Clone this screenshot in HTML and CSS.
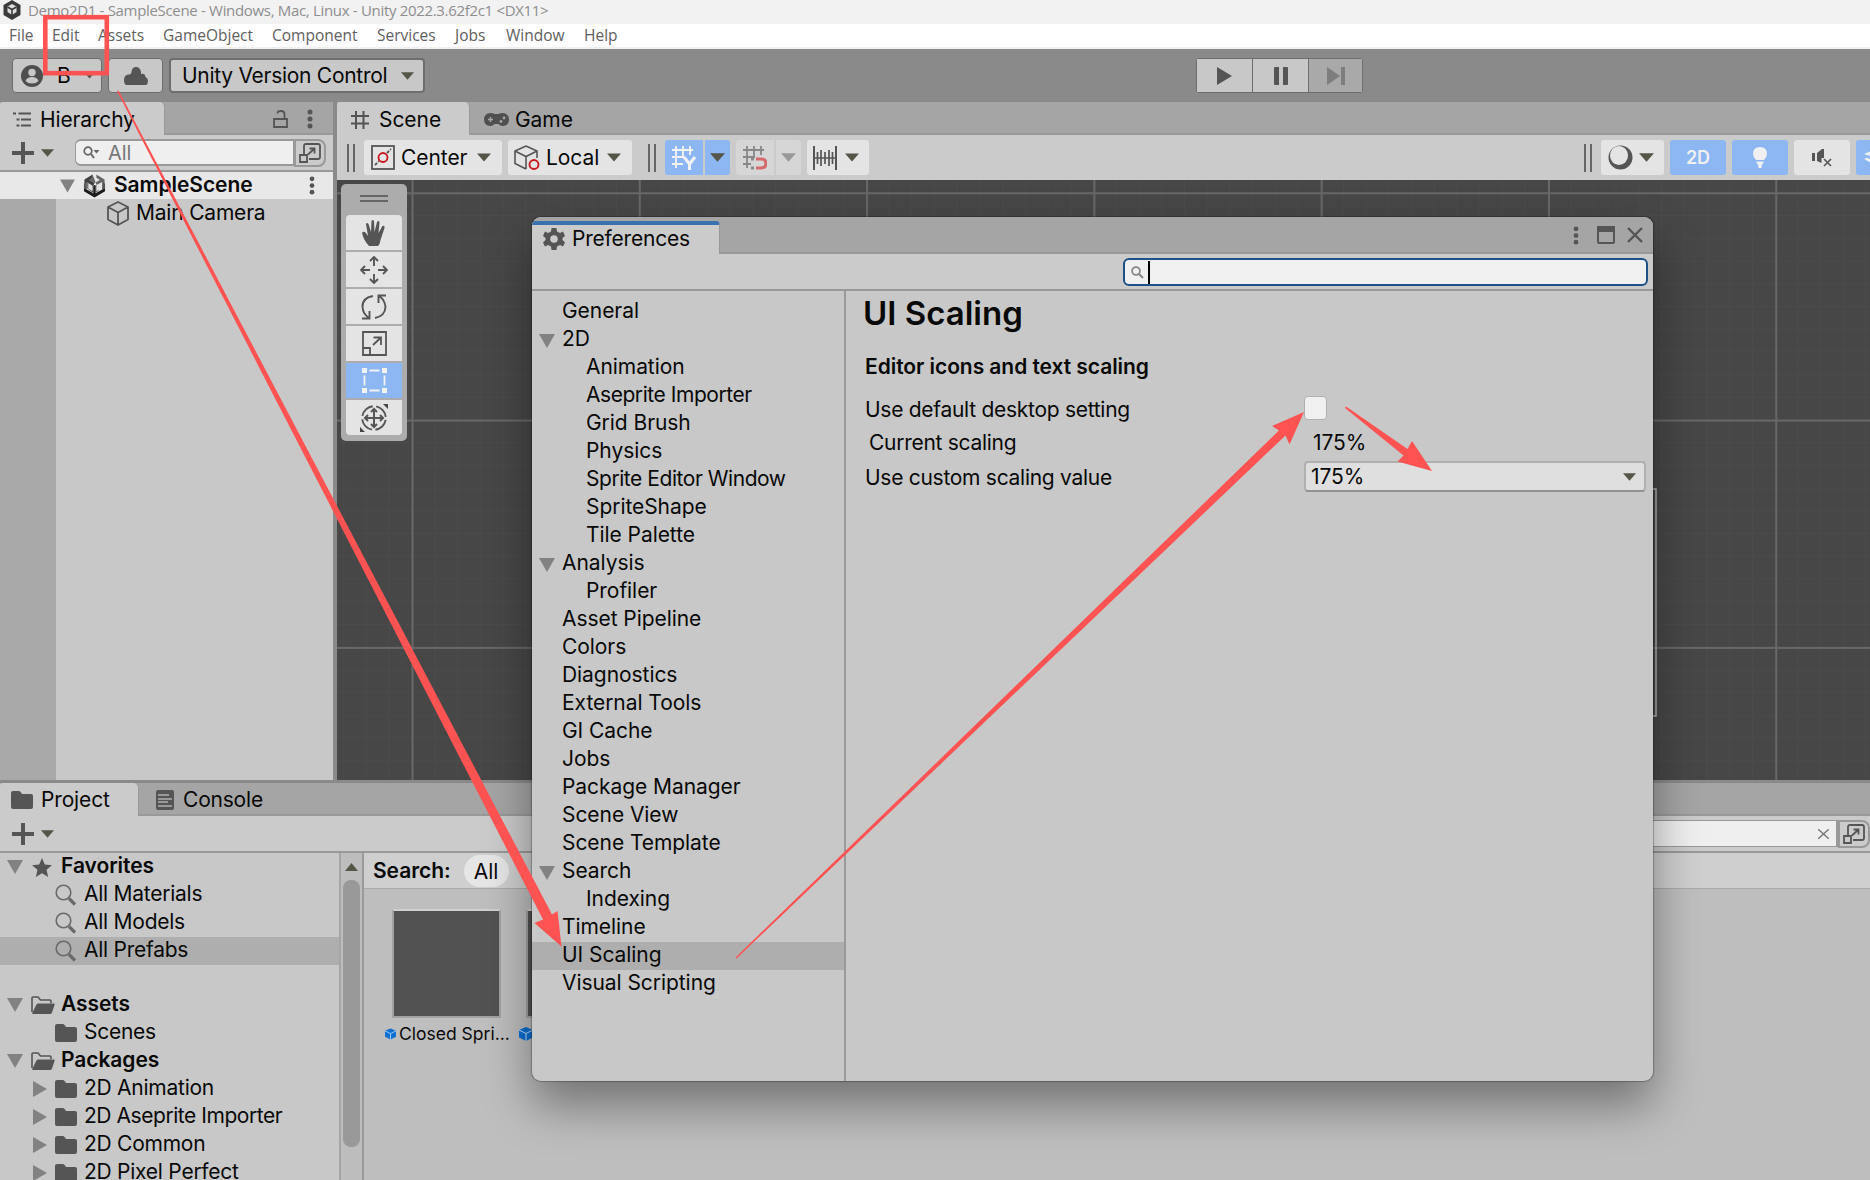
FILE: index.html
```
<!DOCTYPE html>
<html lang="en">

<head>
   <meta charset="UTF-8">
   <meta name="viewport" content="width=device-width, initial-scale=1.0">
   <title>Demo2D1 - SampleScene</title>
   <link rel="stylesheet" href="styles.css">
</head>

<body>
   <!-- shared icons -->
   <svg class="defs" width="0" height="0">
      <symbol id="down" viewBox="0 0 14 8"><path d="M0 0H14L7 8Z" fill="currentColor" /></symbol>
      <symbol id="fold" viewBox="0 0 16 14"><path d="M0 0H16L8 14Z" fill="#828282" /></symbol>
      <symbol id="foldr" viewBox="0 0 14 16"><path d="M0 0V16L14 8Z" fill="#828282" /></symbol>
      <symbol id="kebab" viewBox="0 0 6 20">
         <g fill="#555"><circle cx="3" cy="3" r="2.5" /><circle cx="3" cy="10" r="2.5" /><circle cx="3" cy="17" r="2.5" /></g>
      </symbol>
      <symbol id="folder" viewBox="0 0 22 18"><path d="M0 2Q0 0 2 0H8Q9 0 10 1.5L11 3H20Q22 3 22 5V16Q22 18 20 18H2Q0 18 0 16Z" fill="#555" /></symbol>
      <symbol id="folder-open" viewBox="0 0 24 18">
         <path d="M1 16V2Q1 1 2 1H7L9.5 4H19Q20 4 20 5V7" fill="none" stroke="#555" stroke-width="1.6" />
         <path d="M1 17.5L5.5 8.5Q6 7.5 7 7.5H23Q24 7.500 23.700 8.500L21 16.500Q20.500 18 19 18H2Q1 18 1 17Z" fill="#555" />
      </symbol>
      <symbol id="lens" viewBox="0 0 22 22">
         <circle cx="8.500" cy="8.500" r="7.300" fill="none" stroke="#6a6a6a" stroke-width="1.600" />
         <path d="M14 14.500L20 20.500" stroke="#6a6a6a" stroke-width="3.200" />
      </symbol>
      <symbol id="plus" viewBox="0 0 22 22"><path d="M11 0V22M0 11H22" stroke="#555" stroke-width="4" /></symbol>
      <symbol id="popout" viewBox="0 0 22 20">
         <path d="M5 11V3Q5 1 7 1H19Q21 1 21 3V14Q21 16 19 16H10" fill="none" stroke="#555" stroke-width="1.800" />
         <path d="M1 12H8V19H1ZM9 11.500L15.500 5.500M10.500 5.500H15.500V10.500" fill="none" stroke="#555" stroke-width="1.800" />
      </symbol>
      <symbol id="cube" viewBox="0 0 24 25">
         <path d="M12 1L22 6V18.500L12 24L2 18.500V6ZM2 6L12 11.500L22 6M12 11.500V24" fill="none" stroke="#555" stroke-width="1.800" stroke-linejoin="round" />
      </symbol>
      <symbol id="prefab" viewBox="0 0 14 14">
         <path d="M7 0L14 3V10.500L7 14L0 10.500V3Z" fill="#0d6fd0" />
         <path d="M0 3L7 6.500L14 3M7 6.500V14" fill="none" stroke="#bfe0ff" stroke-width="1" />
      </symbol>
      <symbol id="unity" viewBox="0 0 24 26">
         <path d="M10 1.500V5L6.500 7.200L12 10.500L17.500 7.200L14 5V1.500L22.500 6.800V11.500L19.500 9.500L13.200 13V20.500L16.500 18.500" fill="#666" />
         <path d="M10 1.500V5L6.500 7.200L12 10.500L10.800 13V20.500L7.500 18.500L4.500 16V9.500L1.500 11.500V6.800Z" fill="#3f3f3f" />
         <path d="M1 15.500L4 17.200L10.800 21V13L12 12.500L13.200 13V21L20 17.200L23 15.500V19L12 25.500L1 19Z" fill="#1c1c1c" />
         <path d="M5.500 10.500L10 13.200V19L5.500 16.300ZM18.500 10.500L14 13.200V19L18.500 16.300Z" fill="#e0e0e0" />
         <path d="M20 9.500L23 11V16L20 17.500ZM4 9.500L1 11V16L4 17.500Z" fill="#555" />
      </symbol>
   </svg>

   <div class="editor">
      <header class="titlebar">
         <svg class="app-logo" width="18" height="20" viewBox="0 0 18 20">
            <path d="M9 0L17.500 5V15L9 20L0.500 15V5Z" fill="#3a3a3a" />
            <path d="M9 4L13.500 6.500V12L9 15L4.500 12V6.500Z" fill="#ddd" />
            <path d="M9 9.500V15M9 9.500L4.500 7M9 9.500L13.500 7" stroke="#3a3a3a" stroke-width="1.600" />
         </svg>
         <span>Demo2D1 - SampleScene - Windows, Mac, Linux - Unity 2022.3.62f2c1 &lt;DX11&gt;</span>
      </header>
      <nav class="menubar">
         <span class="m-file">File</span>
         <span class="m-edit">Edit</span>
         <span class="m-assets">Assets</span>
         <span class="m-object">GameObject</span>
         <span class="m-component">Component</span>
         <span class="m-services">Services</span>
         <span class="m-jobs">Jobs</span>
         <span class="m-window">Window</span>
         <span class="m-help">Help</span>
      </nav>

      <div class="toolbar">
         <button class="tb-btn account">
            <svg width="22" height="22" viewBox="0 0 22 22">
               <circle cx="11" cy="11" r="11" fill="#4f4f4f" />
               <circle cx="11" cy="7.500" r="3.700" fill="#c8c8c8" />
               <path d="M4.500 16Q6 12 11 12T17.500 16Q15 18.500 11 18.500T4.500 16Z" fill="#c8c8c8" />
            </svg>
            <span>B</span>
            <svg width="9" height="6"><use href="#down" /></svg>
         </button>
         <button class="tb-btn cloud">
            <svg width="24" height="18" viewBox="0 0 24 18"><path d="M2 18Q0 17 0 13Q0 8 4.500 7.500Q7 8 7.500 5Q8 0 12 0T17 5V7Q21 6 21.500 10Q24 11 24 14Q24 17 22 18Z" fill="#555" /></svg>
         </button>
         <button class="tb-btn version">
            <span>Unity Version Control</span>
            <svg width="13" height="8"><use href="#down" /></svg>
         </button>
         <div class="playbar">
            <button><svg width="15" height="18" viewBox="0 0 15 18"><path d="M0 0L15 9L0 18Z" fill="#555" /></svg></button>
            <button><svg width="14" height="18" viewBox="0 0 14 18"><path d="M0 1Q0 0 1 0H5V18H1Q0 18 0 17ZM9 0H13Q14 0 14 1V17Q14 18 13 18H9Z" fill="#555" /></svg></button>
            <button class="off"><svg width="18" height="18" viewBox="0 0 18 18"><path d="M0 0L13 9L0 18ZM14 0H18V18H14Z" fill="#7d7d7d" /></svg></button>
         </div>
      </div>

      <div class="upper">
         <section class="hierarchy">
            <div class="tabs">
               <div class="tab tab-hierarchy">
                  <svg width="18" height="15" viewBox="0 0 18 15"><path d="M0 1.500H3M5.500 1.500H18M3.500 7.500H6.500M8 7.500H18M3.500 13.500H6.500M8 13.500H18" stroke="#555" stroke-width="1.800" /></svg>
                  <span>Hierarchy</span>
               </div>
               <div class="tab-tools">
                  <svg width="15" height="18" viewBox="0 0 15 18"><path d="M1 9H14V17H1ZM11.500 9V4Q11.500 1 8 1T4.500 3.500" fill="none" stroke="#555" stroke-width="1.800" /></svg>
                  <svg width="6" height="20"><use href="#kebab" /></svg>
               </div>
            </div>
            <div class="strip">
               <svg class="add" width="22" height="22"><use href="#plus" /></svg>
               <svg class="drop" width="13" height="8"><use href="#down" /></svg>
               <div class="search-all">
                  <svg width="17" height="14" viewBox="0 0 17 14"><circle cx="5" cy="5" r="3.800" fill="none" stroke="#666" stroke-width="1.700" /><path d="M8 8L11 12" stroke="#666" stroke-width="2" /><path d="M10.500 4H16.500L13.500 7.500Z" fill="#666" /></svg>
                  <span>All</span>
               </div>
               <div class="search-out"><svg width="22" height="20"><use href="#popout" /></svg></div>
            </div>
            <div class="scene-row">
               <svg width="15" height="14"><use href="#fold" /></svg>
               <svg width="23" height="25"><use href="#unity" /></svg>
               <b>SampleScene</b>
               <svg class="more" width="6" height="19"><use href="#kebab" /></svg>
            </div>
            <div class="objects">
               <div class="object">
                  <svg width="24" height="25"><use href="#cube" /></svg>
                  <span>Main Camera</span>
               </div>
            </div>
         </section>

         <section class="sceneview">
            <div class="tabs">
               <div class="tab tab-scene">
                  <svg width="18" height="18" viewBox="0 0 18 18"><path d="M5 0V18M12.500 0V18M0 5H18M0 12.500H18" stroke="#555" stroke-width="2" /></svg>
                  <span>Scene</span>
               </div>
               <div class="tab tab-game">
                  <svg width="25" height="13" viewBox="0 0 25 13"><path d="M6.500 0Q9 0 10.500 1H14.500Q16 0 18.500 0Q25 0.500 25 6.500T18.500 13Q16 13 14.500 11H10.500Q9 13 6.500 13Q0 12.500 0 6.500T6.500 0Z" fill="#4f4f4f" /><path d="M4 6.500H9M6.500 4V9" stroke="#a5a5a5" stroke-width="1.500" /><circle cx="17" cy="8.500" r="1.400" fill="#a5a5a5" /><circle cx="20" cy="5" r="1.400" fill="#a5a5a5" /></svg>
                  <span>Game</span>
               </div>
            </div>
            <div class="strip scene-tools">
               <i class="grip"></i>
               <div class="tool center">
                  <svg width="24" height="25" viewBox="0 0 24 25"><rect x="1" y="1" width="22" height="23" fill="none" stroke="#555" stroke-width="1.800" /><path d="M4 20L8 16M16 8L20 4" stroke="#555" stroke-width="1.800" stroke-dasharray="3 1.500" /><circle cx="12" cy="12.500" r="4.500" fill="none" stroke="#c8191e" stroke-width="1.800" /></svg>
                  <span>Center</span>
                  <svg width="14" height="9"><use href="#down" /></svg>
               </div>
               <div class="tool local">
                  <svg width="26" height="26" viewBox="0 0 26 26"><path d="M12 1L23 6V13M12 24L1 18.500V6L12 1M1 6L12 11.500L23 6M12 11.500V24" fill="none" stroke="#555" stroke-width="1.600" /><circle cx="20" cy="19.500" r="4.500" fill="#e4e4e4" stroke="#c8191e" stroke-width="1.900" /></svg>
                  <span>Local</span>
                  <svg width="14" height="9"><use href="#down" /></svg>
               </div>
               <i class="grip second"></i>
               <div class="tool half on gridy">
                  <svg width="24" height="24" viewBox="0 0 24 24"><path d="M4 0V22M11 0V11M18 0V9M0 4H21M0 11H12M0 18H11" stroke="#f2f2f2" stroke-width="1.900" /><path d="M12 11L17.500 18L23 11M17.500 17V24" fill="none" stroke="#f2f2f2" stroke-width="3" /></svg>
               </div>
               <div class="tool arrow on"><svg width="15" height="9"><use href="#down" /></svg></div>
               <div class="tool half dim snap">
                  <svg width="24" height="24" viewBox="0 0 24 24"><path d="M4 0V22M11 0V11M18 0V9M0 4H21M0 11H12M0 18H8" stroke="#888" stroke-width="1.800" /><path d="M13 13H18Q23 13 23 17.500T18 22H13" fill="none" stroke="#d56a6c" stroke-width="3" /><path d="M8 13H11M8 22H11" stroke="#888" stroke-width="3" /></svg>
               </div>
               <div class="tool arrow dim"><svg width="15" height="9"><use href="#down" /></svg></div>
               <div class="tool ruler">
                  <svg width="24" height="24" viewBox="0 0 24 24"><path d="M1 0V24M23 0V24" stroke="#555" stroke-width="2" /><path d="M4.500 6V18M8 4V20M12 6V18M16 4V20M19.500 6V18M1 12H23" stroke="#555" stroke-width="1.700" /></svg>
                  <svg width="14" height="9"><use href="#down" /></svg>
               </div>
               <i class="grip third"></i>
               <div class="tool shade">
                  <svg width="25" height="25" viewBox="0 0 25 25"><circle cx="12.500" cy="12.500" r="12" fill="#555" /><ellipse cx="11" cy="10.500" rx="9" ry="9.500" fill="#e4e4e4" /></svg>
                  <svg width="15" height="9"><use href="#down" /></svg>
               </div>
               <div class="tool wide on">2D</div>
               <div class="tool wide on">
                  <svg width="14" height="21" viewBox="0 0 14 21"><path d="M7 0Q14 0 14 7Q14 10 11 13H3Q0 10 0 7Q0 0 7 0ZM3.500 14.500H10.500V16Q10.500 17 9 17L8.500 21H5.500L5 17Q3.500 17 3.500 16Z" fill="#f0f0f0" /></svg>
               </div>
               <div class="tool wide">
                  <svg width="20" height="18" viewBox="0 0 20 18"><path d="M0 4H3V12H0ZM5 4L10 0H12V9H9.500V14L5 12Z" fill="#555" /><path d="M12 10L19 17M19 10L12 17" stroke="#555" stroke-width="1.600" /></svg>
               </div>
               <div class="tool wide on layers">
                  <svg width="24" height="16" viewBox="0 0 24 16"><path d="M0 4L10 0V7.500ZM0 9L3 7.800L10 11V15Z" fill="#f0f0f0" /></svg>
               </div>
            </div>
            <div class="canvas">
               <svg class="camera-frame" width="400" height="230"><path d="M0 1H399V228H0" fill="none" stroke="#b5b5b5" stroke-width="1.500" /></svg>
               <div class="palette">
                  <i class="handle"></i>
                  <div><svg width="26" height="28" viewBox="0 0 26 28"><path d="M8 27Q3 22 1 14Q2 12 4 13L7 17L5 5Q6 3 7.500 5L10 13L10.500 2Q12 0 13 2L13.500 13L16 3Q18 1 18.500 3.500L17.500 14L21.500 7Q24 6 23.500 9L19.500 21Q19 25 17 27Z" fill="#555" /></svg></div>
                  <div><svg width="28" height="28" viewBox="0 0 28 28"><path d="M14 1V10M14 18V27M1 14H10M18 14H27M10 5L14 1L18 5M10 23L14 27L18 23M5 10L1 14L5 18M23 10L27 14L23 18" fill="none" stroke="#555" stroke-width="1.900" /></svg></div>
                  <div><svg width="26" height="26" viewBox="0 0 26 26"><path d="M12 2Q1 4 1.500 13Q2 20 8 24M1 24.500H8.500V17M14 24Q24 22 24.500 13Q24 6 18 2M25 1.500H17.500V9" fill="none" stroke="#555" stroke-width="1.900" /></svg></div>
                  <div><svg width="25" height="25" viewBox="0 0 25 25"><path d="M1 1H24V24H1ZM1 17H8V24M11 14L19 6.500M11.500 6.500H19V14" fill="none" stroke="#555" stroke-width="1.800" /></svg></div>
                  <div class="on"><svg width="25" height="25" viewBox="0 0 25 25"><path d="M0 0H5V5H0ZM20 0H25V5H20ZM0 20H5V25H0ZM20 20H25V25H20Z" fill="#f2f2f2" /><path d="M7.500 2.500H17.500M7.500 22.500H17.500M2.500 7.500V17.500M22.500 7.500V17.500" stroke="#f2f2f2" stroke-width="1.800" /></svg></div>
                  <div><svg width="28" height="28" viewBox="0 0 28 28"><circle cx="14" cy="14" r="11.800" fill="none" stroke="#555" stroke-width="1.900" stroke-dasharray="15 3.500" stroke-dashoffset="-2" /><path d="M14 5V23M5 14H23M11 8L14 5L17 8M11 20L14 23L17 20M8 11L5 14L8 17M20 11L23 14L20 17" fill="none" stroke="#555" stroke-width="2" /><path d="M23 0H28V5ZM0 23V28H5Z" fill="#444" /></svg></div>
               </div>
            </div>
         </section>
      </div>

      <section class="project">
         <div class="tabs">
            <div class="tab tab-project">
               <svg width="22" height="18"><use href="#folder" /></svg>
               <span>Project</span>
            </div>
            <div class="tab tab-console">
               <svg width="18" height="20" viewBox="0 0 18 20"><rect width="18" height="20" rx="2" fill="#555" /><path d="M2 5H13M2 9H16M2 12H12M2 16H16" stroke="#b0b0b0" stroke-width="1.300" /></svg>
               <span>Console</span>
            </div>
         </div>
         <div class="strip">
            <svg class="add" width="22" height="22"><use href="#plus" /></svg>
            <svg class="drop" width="13" height="8"><use href="#down" /></svg>
            <div class="project-search">
               <svg width="11" height="10" viewBox="0 0 11 10"><path d="M0 0L11 10M11 0L0 10" stroke="#777" stroke-width="1.300" /></svg>
            </div>
            <div class="search-out"><svg width="22" height="22"><use href="#popout" /></svg></div>
         </div>
         <div class="browser">
            <div class="tree">
               <div class="row root"><svg width="16" height="14"><use href="#fold" /></svg><svg class="ic star" width="20" height="19" viewBox="0 0 20 19"><path d="M10 0L12.800 6.500L20 7.200L14.500 11.800L16.200 19L10 15.200L3.800 19L5.500 11.800L0 7.200L7.200 6.500Z" fill="#555" /></svg><b>Favorites</b></div>
               <div class="row leaf"><svg width="22" height="22"><use href="#lens" /></svg><span>All Materials</span></div>
               <div class="row leaf"><svg width="22" height="22"><use href="#lens" /></svg><span>All Models</span></div>
               <div class="row leaf selected"><svg width="22" height="22"><use href="#lens" /></svg><span>All Prefabs</span></div>
               <div class="row root assets"><svg width="16" height="14"><use href="#fold" /></svg><svg class="ic" width="24" height="18"><use href="#folder-open" /></svg><b>Assets</b></div>
               <div class="row leaf"><svg width="22" height="18"><use href="#folder" /></svg><span>Scenes</span></div>
               <div class="row root"><svg width="16" height="14"><use href="#fold" /></svg><svg class="ic" width="24" height="18"><use href="#folder-open" /></svg><b>Packages</b></div>
               <div class="row pack"><svg width="14" height="16"><use href="#foldr" /></svg><svg width="22" height="18"><use href="#folder" /></svg><span>2D Animation</span></div>
               <div class="row pack"><svg width="14" height="16"><use href="#foldr" /></svg><svg width="22" height="18"><use href="#folder" /></svg><span class="tight">2D Aseprite Importer</span></div>
               <div class="row pack"><svg width="14" height="16"><use href="#foldr" /></svg><svg width="22" height="18"><use href="#folder" /></svg><span>2D Common</span></div>
               <div class="row pack"><svg width="14" height="16"><use href="#foldr" /></svg><svg width="22" height="18"><use href="#folder" /></svg><span>2D Pixel Perfect</span></div>
            </div>
            <div class="scrollbar">
               <svg width="13" height="8" viewBox="0 0 13 8"><path d="M6.500 0L13 8H0Z" fill="#555548" /></svg>
               <i></i>
            </div>
            <div class="content">
               <div class="filter"><b>Search:</b><span>All</span></div>
               <div class="items">
                  <div class="item">
                     <div class="thumb"></div>
                     <p><svg width="11" height="12"><use href="#prefab" /></svg>Closed Spri...</p>
                  </div>
                  <div class="item">
                     <div class="thumb"></div>
                     <p><svg width="14" height="14"><use href="#prefab" /></svg></p>
                  </div>
               </div>
            </div>
         </div>
      </section>
   </div>

   <div class="prefs">
      <div class="prefs-head">
         <div class="prefs-tab">
            <svg width="22" height="22" viewBox="0 0 22 22"><path d="M8.500 0H13.500L14 3.500L17 5L20 3.500L22 8L19.500 10V12L22 14.500L20 18.500L17 17L14 18.500L13.500 22H8.500L8 18.500L5 17L2 18.500L0 14.500L2.500 12V10L0 8L2 3.500L5 5L8 3.500Z" fill="#555" /><circle cx="11" cy="11" r="3.800" fill="#cbcbcb" /></svg>
            <span>Preferences</span>
         </div>
         <div class="prefs-controls">
            <svg width="6" height="19"><use href="#kebab" /></svg>
            <svg width="18" height="18" viewBox="0 0 18 18"><rect x="1" y="1" width="16" height="16" rx="1" fill="none" stroke="#555" stroke-width="2" /><path d="M0 0H18V6H0Z" fill="#555" /></svg>
            <svg width="16" height="16" viewBox="0 0 16 16"><path d="M1 1L15 15M15 1L1 15" stroke="#555" stroke-width="2.400" /></svg>
         </div>
      </div>
      <div class="prefs-bar">
         <div class="prefs-search">
            <svg width="13" height="13" viewBox="0 0 13 13"><circle cx="5" cy="5" r="3.900" fill="none" stroke="#888" stroke-width="1.800" /><path d="M8 8L12 12" stroke="#888" stroke-width="2.200" /></svg>
            <i></i>
         </div>
      </div>
      <div class="prefs-body">
         <div class="prefs-nav">
            <p>General</p>
            <p class="open"><svg width="16" height="14"><use href="#fold" /></svg>2D</p>
            <p class="sub">Animation</p>
            <p class="sub tight">Aseprite Importer</p>
            <p class="sub">Grid Brush</p>
            <p class="sub">Physics</p>
            <p class="sub tight">Sprite Editor Window</p>
            <p class="sub">SpriteShape</p>
            <p class="sub">Tile Palette</p>
            <p class="open"><svg width="16" height="14"><use href="#fold" /></svg>Analysis</p>
            <p class="sub">Profiler</p>
            <p>Asset Pipeline</p>
            <p>Colors</p>
            <p>Diagnostics</p>
            <p>External Tools</p>
            <p>GI Cache</p>
            <p>Jobs</p>
            <p>Package Manager</p>
            <p>Scene View</p>
            <p>Scene Template</p>
            <p class="open"><svg width="16" height="14"><use href="#fold" /></svg>Search</p>
            <p class="sub">Indexing</p>
            <p>Timeline</p>
            <p class="selected">UI Scaling</p>
            <p>Visual Scripting</p>
         </div>
         <div class="prefs-page">
            <h1>UI Scaling</h1>
            <h2>Editor icons and text scaling</h2>
            <div class="field"><label>Use default desktop setting</label><span class="checkbox"></span></div>
            <div class="field current"><label>Current scaling</label><span>175%</span></div>
            <div class="field custom">
               <label>Use custom scaling value</label>
               <div class="select"><span>175%</span><svg width="13" height="8"><use href="#down" /></svg></div>
            </div>
         </div>
      </div>
   </div>

   <!-- red marks on top of everything -->
   <svg class="marks" width="1870" height="1180" viewBox="0 0 1870 1180">
      <rect x="45.300" y="17.200" width="61.500" height="56" fill="none" stroke="#ff5252" stroke-width="4.600" />
      <g fill="#ff5252">
         <path d="M117 91L118.500 90.500L552 914.500L557.500 911L561.500 946.500L534.500 923L543 919.500Z" />
         <path d="M735.500 957.500L1279 430.500L1272 426L1304 412L1289.500 444.500L1285.500 435.500L736.500 958.500Z" />
         <path d="M1345 408L1346 406.500L1407.500 449L1412 441L1432 471L1397.500 461.500L1403.500 455.500Z" />
      </g>
   </svg>
</body>

</html>
```
FILE: styles.css
```
* {
   margin: 0;
   padding: 0;
   box-sizing: border-box;
}

body {
   width: 1870px;
   height: 1180px;
   overflow: hidden;
   position: relative;
   background-color: #8a8a8a;
   color: #090909;
   font-family: Inter, 'Liberation Sans', sans-serif;
   font-size: 21px;
   letter-spacing: -0.060px;
}

b {
   font-weight: 600;
}

svg {
   display: block;
   flex-shrink: 0;
}

span,
b,
label {
   white-space: nowrap;
}

button {
   border: none;
   font: inherit;
   color: inherit;
   letter-spacing: inherit;
}

.tight {
   letter-spacing: -0.450px;
}

.defs,
.marks {
   position: absolute;
   top: 0;
   left: 0;
}

.editor {
   height: 1180px;
   display: flex;
   flex-direction: column;
}

.titlebar {
   height: 24px;
   background-color: #f2f2f2;
   color: #8e8e8e;
   display: flex;
   align-items: center;
   padding: 0 3px 5px;
   gap: 7px;
   font: 15px 'Open Sans', sans-serif;
   letter-spacing: -0.320px;
}

.menubar {
   height: 25px;
   background-color: #fff;
   border-bottom: 2px solid #f0f0f0;
   color: #606060;
   display: flex;
   align-items: center;
   padding: 0 0 1px 9px;
   font: 15.500px 'Open Sans', sans-serif;
   letter-spacing: 0;
}

.m-file { width: 43px; }
.m-edit { width: 46px; }
.m-assets { width: 65px; }
.m-object { width: 109px; }
.m-component { width: 105px; }
.m-services { width: 78px; }
.m-jobs { width: 51px; }
.m-window { width: 78px; }

.toolbar {
   height: 53px;
   display: flex;
   padding: 9px 12px 0;
}

.tb-btn {
   height: 35px;
   background-color: #c8c8c8;
   border: 1px solid #6e6e6e;
   border-radius: 4px;
   display: flex;
   align-items: center;
}

.account {
   width: 90px;
   padding-left: 8px;
}

.account span {
   margin: 0 14px;
}

.tb-btn svg,
.strip {
   color: #555548;
}

.cloud {
   width: 55px;
   margin-left: 6px;
   justify-content: center;
}

.version {
   width: 256px;
   margin-left: 6px;
   padding-left: 11px;
   border-width: 2px;
}

.version span {
   width: 219px;
   text-align: left;
   letter-spacing: -0.280px;
}

.playbar {
   display: flex;
   margin-left: 771px;
   height: 35px;
   border: 1px solid #6e6e6e;
   border-radius: 3px;
   background-color: #6e6e6e;
   gap: 1px;
}

.playbar button {
   width: 55px;
   background-color: #c8c8c8;
   display: flex;
   align-items: center;
   justify-content: center;
}

.playbar .off {
   width: 53px;
   background-color: #a9a9a9;
}

.upper {
   height: 678px;
   display: flex;
   gap: 4px;
}

.tabs {
   height: 33px;
   display: flex;
   background-color: #a5a5a5;
   box-shadow: inset 0 -2px #999;
}

.tab {
   display: flex;
   align-items: center;
}

.upper .tab {
   padding-top: 2px;
}

.tab-hierarchy,
.tab-scene,
.tab-project {
   background-color: #cbcbcb;
   border-radius: 3px 5px 0 0;
   border-right: 1px solid #999;
}

.strip {
   height: 45px;
   background-color: #cbcbcb;
   display: flex;
   align-items: center;
}

.hierarchy {
   width: 333px;
   display: flex;
   flex-direction: column;
   background-color: #c8c8c8;
}

.tab-hierarchy {
   width: 165px;
   padding-left: 13px;
   gap: 9px;
   letter-spacing: -0.150px;
}

.tab-tools {
   margin-left: auto;
   display: flex;
   align-items: center;
   gap: 19px;
   padding-right: 20px;
}

.hierarchy .strip {
   height: 37px;
   border-bottom: 2px solid #999;
}

.add {
   margin-left: 12px;
}

.drop {
   margin-left: 7px;
}

.search-all {
   width: 219px;
   height: 27px;
   margin-left: 21px;
   background-color: #efefef;
   border: 1px solid #999;
   border-width: 2px 1px;
   border-radius: 6px 0 0 6px;
   display: flex;
   align-items: center;
   padding-left: 7px;
   gap: 8px;
   color: #777;
   font-size: 20px;
}

.search-out {
   width: 32px;
   height: 28px;
   border: 2px solid #999;
   border-radius: 0 8px 8px 0;
   display: flex;
   align-items: center;
   justify-content: center;
}

.scene-row {
   height: 27px;
   background-color: #e8e8e8;
   display: flex;
   align-items: center;
   padding: 0 18px 0 60px;
}

.scene-row b {
   margin: 0 0 2px 8px;
}

.scene-row svg:nth-child(2) {
   margin-left: 8px;
}

.more {
   margin-left: auto;
}

.objects {
   flex: 1;
   border-left: 56px solid #a9a9a9;
}

.object {
   height: 28px;
   display: flex;
   align-items: center;
   padding-left: 50px;
   gap: 6px;
}

.object span {
   margin-bottom: 2px;
   letter-spacing: -0.200px;
}

.sceneview {
   flex: 1;
   min-width: 0;
   display: flex;
   flex-direction: column;
}

.tab-scene {
   width: 133px;
   padding-left: 14px;
   gap: 10px;
}

.tab-game {
   padding-left: 14px;
   gap: 6px;
}

.grip {
   width: 8px;
   height: 28px;
   border: solid #666;
   border-width: 0 2px;
   margin: 0 9px 0 10px;
   flex-shrink: 0;
}

.grip.second {
   margin: 0 9px 0 10px;
}

.grip.third {
   margin: 0 9px 0 auto;
}

.tool {
   height: 35px;
   flex-shrink: 0;
   background-color: #e4e4e4;
   border-radius: 3px;
   display: flex;
   align-items: center;
   margin-right: 6px;
}

.tool.on {
   background-color: #8cb7f3;
}

.tool.dim {
   background-color: #d6d6d6;
   color: #999;
}

.center {
   width: 138px;
   padding-left: 7px;
}

.center span {
   width: 76px;
   margin-left: 6px;
   color: #090909;
}

.local {
   width: 124px;
   padding-left: 6px;
}

.local span {
   width: 61px;
   margin-left: 6px;
   color: #090909;
}

.tool.half {
   width: 38px;
   justify-content: center;
   margin-right: 2px;
   border-radius: 3px 0 0 3px;
}

.tool.arrow {
   width: 25px;
   justify-content: center;
   border-radius: 0 3px 3px 0;
}

.ruler {
   width: 62px;
   padding-left: 6px;
   gap: 8px;
}

.shade {
   width: 63px;
   padding-left: 7px;
   gap: 6px;
}

.tool.wide {
   width: 56px;
   justify-content: center;
   color: #f0f0f0;
   font-size: 18px;
   font-weight: 600;
}

.tool.layers {
   width: 14px;
   margin-right: 0;
   overflow: hidden;
   justify-content: flex-start;
   padding-left: 8px;
   border-radius: 3px 0 0 3px;
}

.canvas {
   flex: 1;
   position: relative;
   overflow: hidden;
   background-color: #474747;
   background-image:
      linear-gradient(to right, #686868 2px, transparent 2px),
      linear-gradient(to bottom, #686868 2px, transparent 2px),
      linear-gradient(to right, #4b4b4b 1px, transparent 1px),
      linear-gradient(to bottom, #4b4b4b 1px, transparent 1px);
   background-size: 227.300px 227.300px, 227.300px 227.300px, 22.730px 22.730px, 22.730px 22.730px;
   background-position: 74.500px 12.300px;
}

.camera-frame {
   position: absolute;
   left: 920px;
   top: 308px;
}

.palette {
   position: absolute;
   left: 4px;
   top: 4px;
   width: 66px;
   height: 257px;
   background-color: #acacac;
   border-radius: 5px;
   padding: 0 5px;
   display: flex;
   flex-direction: column;
   gap: 2px;
}

.palette .handle {
   width: 28px;
   height: 7px;
   margin: 11px auto;
   border: solid #666;
   border-width: 2px 0;
}

.palette div {
   height: 35px;
   background-color: #e4e4e4;
   display: flex;
   align-items: center;
   justify-content: center;
}

.palette div:nth-child(2) {
   border-radius: 4px 4px 0 0;
}

.palette div:last-child {
   border-radius: 0 0 4px 4px;
}

.palette .on {
   background-color: #8cb7f3;
}

.project {
   height: 397px;
   margin-top: 3px;
   display: flex;
   flex-direction: column;
}

.tab-project {
   width: 139px;
   padding-left: 11px;
   gap: 8px;
   letter-spacing: -0.150px;
}

.tab-console {
   padding-left: 17px;
   gap: 9px;
   letter-spacing: -0.200px;
}

.project .strip {
   height: 37px;
   border-bottom: 2px solid #999;
}

.project-search {
   width: 520px;
   height: 27px;
   margin-left: auto;
   background-color: #efefef;
   border: 1px solid #999;
   border-right-width: 2px;
   display: flex;
   align-items: center;
   justify-content: flex-end;
   padding-right: 7px;
}

.browser {
   flex: 1;
   min-height: 0;
   display: flex;
}

.tree {
   width: 339px;
   overflow: hidden;
   background-color: #c8c8c8;
}

.row {
   height: 28px;
   display: flex;
   align-items: center;
   white-space: nowrap;
   padding-bottom: 4px;
}

.row svg {
   position: relative;
   top: 2px;
}

.row span {
   letter-spacing: -0.250px;
}

.row .tight {
   letter-spacing: -0.450px;
}

.root {
   padding-left: 7px;
}

.root .ic {
   margin-left: 8px;
}

.root b {
   margin-left: 6px;
}

.root .star {
   margin: 0 3px 0 9px;
}

.leaf {
   padding-left: 55px;
   gap: 7px;
}

.pack {
   padding-left: 33px;
   gap: 7px;
}

.pack svg:first-child {
   margin-right: 1px;
}

.selected {
   background-color: #aeaeae;
}

.assets {
   margin-top: 26px;
}

.scrollbar {
   width: 25px;
   background-color: #bdbdbd;
   border-left: 2px solid #a5a5a5;
   border-right: 2px solid #999;
   display: flex;
   flex-direction: column;
   align-items: center;
   padding-top: 10px;
}

.scrollbar i {
   width: 17px;
   height: 267px;
   margin-top: 9px;
   border-radius: 8px;
   background-color: #999;
}

.content {
   flex: 1;
   background-color: #bebebe;
}

.filter {
   height: 36px;
   background-color: #cfcfcf;
   border-bottom: 1px solid #aaa;
   display: flex;
   align-items: center;
   padding-left: 9px;
   gap: 13px;
}

.filter span {
   width: 45px;
   height: 32px;
   line-height: 33px;
   border-radius: 16px;
   background-color: #e6e6e6;
   text-align: center;
}

.items {
   display: flex;
   padding: 20px 0 0 21px;
   gap: 13px;
}

.item {
   width: 121px;
}

.thumb {
   width: 109px;
   height: 109px;
   margin-left: 7px;
   background-color: #525252;
   border: 2px solid #a2a2a2;
   border-top-color: #d0d0d0;
}

.item p {
   display: flex;
   align-items: center;
   gap: 3px;
   height: 31px;
   font-size: 17.500px;
   letter-spacing: 0;
   white-space: nowrap;
}

/* preferences window */
.prefs {
   position: absolute;
   left: 532px;
   top: 217px;
   width: 1121px;
   height: 864px;
   border-radius: 9px;
   overflow: hidden;
   background-color: #c8c8c8;
   display: flex;
   flex-direction: column;
   box-shadow: 0 0 1px 1px rgba(0, 0, 0, 0.25), 0 24px 48px rgba(0, 0, 0, 0.4);
}

.prefs-head {
   height: 37px;
   background-color: #a5a5a5;
   box-shadow: inset 0 -2px #999;
   display: flex;
   justify-content: space-between;
   padding-top: 4px;
}

.prefs-tab {
   width: 188px;
   background-color: #cbcbcb;
   border-top: 4px solid #3a72b0;
   border-right: 1px solid #999;
   border-radius: 0 4px 0 0;
   display: flex;
   align-items: center;
   padding: 0 0 2px 11px;
   gap: 7px;
   letter-spacing: -0.200px;
}

.prefs-controls {
   display: flex;
   align-items: center;
   gap: 12px;
   padding: 0 10px 5px 0;
}

.prefs-controls svg:first-child {
   margin-right: 6px;
}

.prefs-bar {
   height: 37px;
   background-color: #cbcbcb;
   border-bottom: 2px solid #999;
   padding: 4px 5px 0 0;
}

.prefs-search {
   width: 525px;
   height: 28px;
   margin-left: auto;
   background-color: #f0f0f0;
   border: 2px solid #1d5087;
   border-radius: 6px;
   display: flex;
   align-items: center;
   padding-left: 6px;
   gap: 4px;
}

.prefs-search i {
   width: 2px;
   height: 23px;
   background-color: #000;
}

.prefs-body {
   flex: 1;
   display: flex;
}

.prefs-nav {
   width: 314px;
   border-right: 2px solid #999;
   padding-top: 7px;
}

.prefs-nav p {
   height: 28px;
   line-height: 25px;
   padding-left: 30px;
   white-space: nowrap;
}

.prefs-nav .sub {
   padding-left: 54px;
}

.prefs-nav .open {
   display: flex;
   padding-left: 7px;
   gap: 7px;
}

.open svg {
   margin-top: 8px;
}

.prefs-page {
   flex: 1;
   padding: 2px 7px 0 17px;
}

.prefs-page h1 {
   font-size: 33px;
   font-weight: 600;
   line-height: 40px;
   letter-spacing: 0;
}

.prefs-page h2 {
   font-size: 21px;
   font-weight: 600;
   line-height: 26px;
   margin: 21px 0 13px 2px;
}

.field {
   display: flex;
   align-items: center;
   height: 33px;
   padding-left: 2px;
}

.field label {
   width: 439px;
   letter-spacing: -0.280px;
}

.checkbox {
   width: 23px;
   height: 24px;
   margin-bottom: 3px;
   border: 1px solid #b0b0b0;
   border-radius: 4px;
   background-color: #f0f0f0;
}

.current {
   padding-left: 6px;
}

.current label {
   width: 444px;
}

.custom {
   height: 36px;
}

.select {
   flex: 1;
   height: 31px;
   margin-bottom: 1px;
   background-color: #dfdfdf;
   border: 2px solid #b0b0b0;
   border-bottom-color: #939393;
   border-radius: 4px;
   display: flex;
   align-items: center;
   justify-content: space-between;
   padding: 0 8px 0 5px;
   color: #090909;
}

.select svg {
   color: #555548;
}
```
